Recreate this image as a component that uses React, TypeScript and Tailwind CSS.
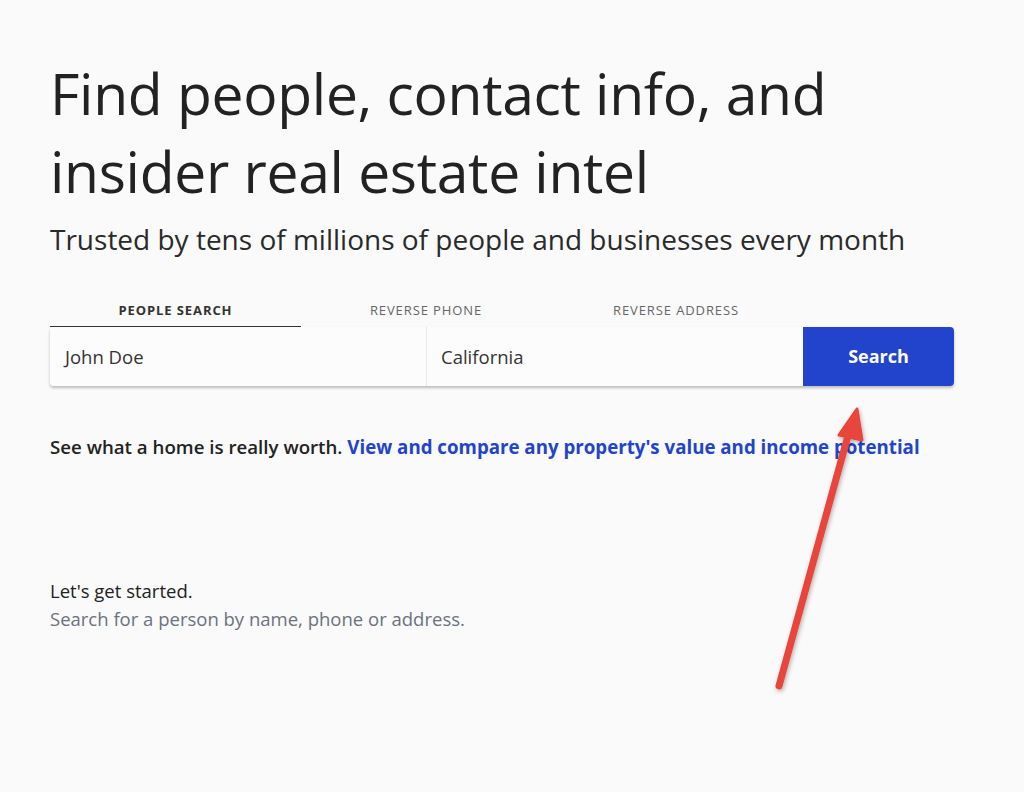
import React from "react";

export default function App() {
  const font = { fontFamily: '"Open Sans", "Noto Sans", sans-serif' };
  return (
    <div className="relative min-h-[792px] w-[1024px] bg-[#fafafa] text-[#222]" style={font}>
      <div className="pl-[50px] pt-[54px]">
        <h1 className="text-[57px] leading-[78px] font-normal text-[#222] tracking-[-0.3px]">
          Find people, contact info, and
          <br />
          insider real estate intel
        </h1>
        <p className="mt-[11px] text-[28px] leading-[36px] text-[#2a2a2a]">
          Trusted by tens of millions of people and businesses every month
        </p>

        <div className="mt-[38px] w-[904px]">
          <div className="flex h-[32px]">
            <div className="flex w-[251px] items-center justify-center border-b border-[#333] text-[13px] font-bold tracking-[0.9px] text-[#333]">
              PEOPLE SEARCH
            </div>
            <div className="flex w-[250px] items-center justify-center text-[13px] tracking-[0.9px] text-[#666]">
              REVERSE PHONE
            </div>
            <div className="flex w-[250px] items-center justify-center text-[13px] tracking-[0.9px] text-[#666]">
              REVERSE ADDRESS
            </div>
          </div>
          <div className="flex h-[59px] rounded-[4px] shadow-[0_2px_3px_rgba(0,0,0,0.25)]">
            <div className="flex w-[376px] items-center rounded-l-[4px] bg-[#fcfcfc] pl-[15px] text-[18.5px] text-[#333]">
              John Doe
            </div>
            <div className="w-px bg-[#e6e6e6]" />
            <div className="flex w-[376px] items-center bg-[#fcfcfc] pl-[14px] text-[18.5px] text-[#333]">
              California
            </div>
            <button className="flex w-[151px] items-center justify-center rounded-r-[4px] bg-[#2244cc] text-[18px] font-bold text-white">
              Search
            </button>
          </div>
        </div>

        <p className="mt-[47px] text-[18.7px] font-semibold text-[#222]">
          See what a home is really worth.{" "}
          <span className="font-bold text-[#2244cc]">View and compare any property's value and income potential</span>
        </p>

        <div className="mt-[116px]">
          <p className="text-[18.5px] leading-[28px] text-[#222]">Let's get started.</p>
          <p className="text-[18.5px] leading-[28px] text-[#6b7280]">Search for a person by name, phone or address.</p>
        </div>
      </div>

      <svg className="pointer-events-none absolute left-0 top-0" width="1024" height="792">
        <defs>
          <filter id="sh" x="-50%" y="-50%" width="200%" height="200%">
            <feDropShadow dx="1" dy="2" stdDeviation="2" floodColor="#000" floodOpacity="0.3" />
          </filter>
        </defs>
        <g filter="url(#sh)" fill="#e8453c" stroke="#e8453c" strokeLinejoin="round">
          <line x1="779" y1="686" x2="849" y2="432" strokeWidth="7" strokeLinecap="round" />
          <polygon points="857,409 839,435 862,440" strokeWidth="3" />
        </g>
      </svg>
    </div>
  );
}
